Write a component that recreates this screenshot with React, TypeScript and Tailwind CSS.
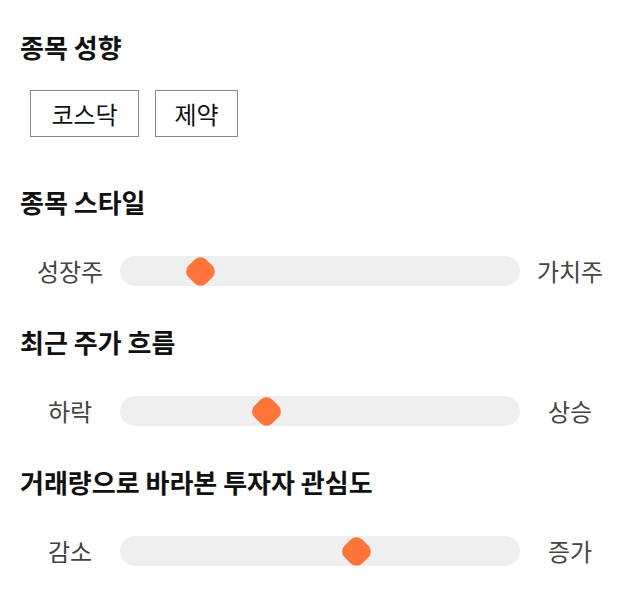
import React from "react";

const font = { fontFamily: '"Noto Sans CJK KR", "Noto Sans", sans-serif' };

function Slider({ left, right, pos }: { left: string; right: string; pos: number }) {
  return (
    <div className="flex items-center h-[30px]">
      <div className="w-[100px] text-center text-[24px] leading-[30px] text-[#444]">{left}</div>
      <div className="relative w-[400px] h-[30px] rounded-full bg-[#efefef]">
        <div
          className="absolute top-[2.5px] w-[25px] h-[25px] rounded-[8px] bg-[#ff7539] rotate-45"
          style={{ left: pos - 12.5 }}
        />
      </div>
      <div className="w-[100px] text-center text-[24px] leading-[30px] text-[#444]">{right}</div>
    </div>
  );
}

export default function App() {
  return (
    <div className="w-[640px] h-[606px] bg-white px-5 pt-[32px]" style={font}>
      <h2 className="h-[30px] leading-[30px] text-[26px] font-bold text-[#111]">종목 성향</h2>
      <div className="flex gap-4 ml-[10px] mt-[28px]">
        <div className="w-[109px] h-[47px] flex items-center justify-center border border-[#888] text-[24px] text-[#111]">코스닥</div>
        <div className="w-[83px] h-[47px] flex items-center justify-center border border-[#888] text-[24px] text-[#111]">제약</div>
      </div>
      <h2 className="mt-[50px] h-[30px] leading-[30px] text-[26px] font-bold text-[#111]">종목 스타일</h2>
      <div className="mt-[39px]">
        <Slider left="성장주" right="가치주" pos={80} />
      </div>
      <h2 className="mt-[41px] h-[30px] leading-[30px] text-[26px] font-bold text-[#111]">최근 주가 흐름</h2>
      <div className="mt-[39px]">
        <Slider left="하락" right="상승" pos={146} />
      </div>
      <h2 className="mt-[41px] h-[30px] leading-[30px] text-[26px] font-bold text-[#111]">거래량으로 바라본 투자자 관심도</h2>
      <div className="mt-[39px]">
        <Slider left="감소" right="증가" pos={236} />
      </div>
    </div>
  );
}
